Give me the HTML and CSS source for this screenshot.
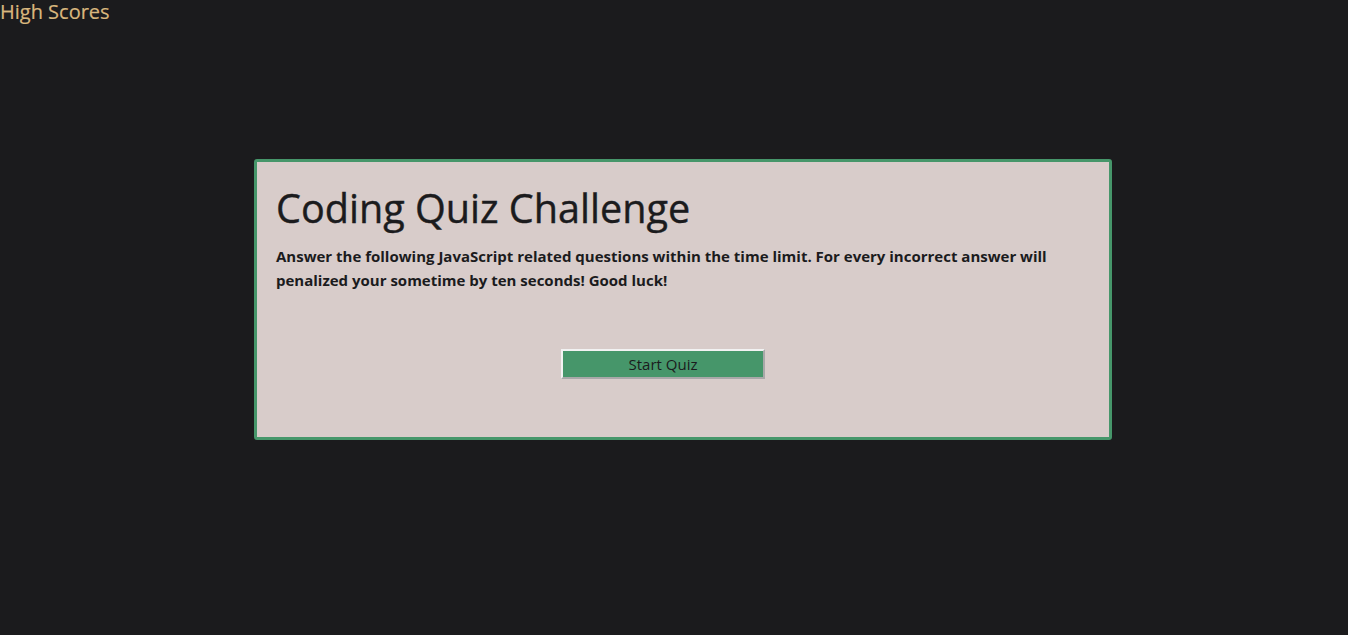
FILE: index.html
```html
<!DOCTYPE html>
<html lang="en">
<head>
<meta charset="utf-8">
<title>Coding Quiz Challenge</title>
<link rel="stylesheet" href="styles.css">
</head>
<body>
<header class="topbar">
  <a class="scores-link" href="#">High Scores</a>
</header>
<main class="quiz-card">
  <h1 class="quiz-title">Coding Quiz Challenge</h1>
  <p class="quiz-intro">Answer the following JavaScript related questions within the time limit. For every incorrect answer will penalized your sometime by ten seconds! Good luck!</p>
  <button class="start-btn" type="button">Start Quiz</button>
</main>
</body>
</html>
```
FILE: styles.css
```css
html, body {
  margin: 0;
  padding: 0;
}
body {
  background: #1b1b1d;
  font-family: "Open Sans", "Noto Sans", sans-serif;
  min-height: 635px;
}
.topbar {
  height: 24px;
}
.scores-link {
  display: block;
  color: #d9b77d;
  text-decoration: none;
  font-size: 20px;
  font-weight: 500;
  line-height: 24px;
  -webkit-text-stroke: 0.2px #d9b77d;
}
.quiz-card {
  box-sizing: border-box;
  width: 858px;
  height: 281px;
  margin: 135px 0 0 254px;
  background: #d8ccca;
  border: 3px solid #46966a;
  border-radius: 3px;
  padding: 22px 19px 0 19px;
}
.quiz-title {
  margin: 0;
  font-size: 39.6px;
  font-weight: 500;
  line-height: 48px;
  color: #1b1b1d;
  -webkit-text-stroke: 0.4px #1b1b1d;
}
.quiz-intro {
  margin: 12px 0 0 0;
  font-size: 15px;
  font-weight: 700;
  line-height: 24px;
  color: #1b1b1d;
}
.start-btn {
  display: block;
  box-sizing: border-box;
  width: 204px;
  height: 30px;
  margin: 57px 0 0 285px;
  background: #46966a;
  border-style: solid;
  border-width: 2px;
  border-color: #f2f2f2 #a8a8a8 #a8a8a8 #f2f2f2;
  font-family: "Open Sans", "Noto Sans", sans-serif;
  font-size: 15px;
  color: #1b1b1d;
  padding: 0;
}
```
